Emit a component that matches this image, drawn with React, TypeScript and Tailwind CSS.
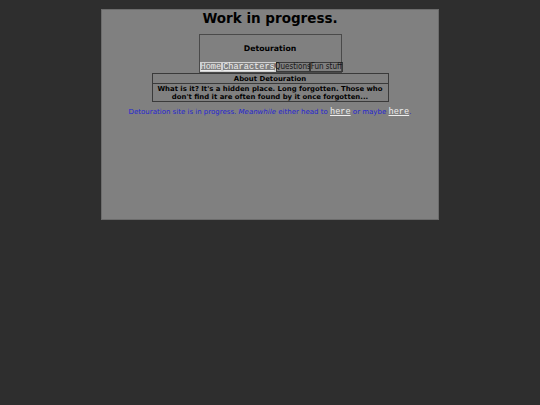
import React from 'react';

const sans = { fontFamily: '"DejaVu Sans", Verdana, sans-serif' };

export default function App() {
  return (
    <div className="min-h-[405px] w-full bg-[#2e2e2e] pt-[9px]" style={sans}>
      <div className="mx-auto flex h-[211px] w-[338px] flex-col items-center border border-[#6c6c6c] bg-[#808080] text-black">
        <h1 className="text-[13.5px] font-bold leading-[16px]">Work in progress.</h1>

        <div className="mt-[8px] flex w-[143px] flex-col border border-[#4a4a4a]">
          <div className="flex h-[27px] items-center justify-center text-[7.75px] font-bold">Detouration</div>
          <div className="flex h-[10px] whitespace-nowrap leading-[8px]">
            <a className="flex w-[23px] items-center justify-center border border-[#d0d0d0] font-['Liberation_Mono',monospace] text-[8.6px] text-[#eeeeee] underline">Home</a>
            <a className="flex w-[54px] items-center justify-center border border-[#d0d0d0] font-['Liberation_Mono',monospace] text-[8.6px] text-[#eeeeee] underline">Characters</a>
            <span className="flex w-[34px] items-center justify-center border border-[#3a3a3a] font-['Liberation_Sans_Narrow','DejaVu_Sans_Condensed',sans-serif] text-[8px] text-[#151515]">Questions</span>
            <span className="flex flex-1 items-center justify-center border border-[#3a3a3a] font-['Liberation_Sans_Narrow','DejaVu_Sans_Condensed',sans-serif] text-[8px] text-[#151515]">Fun stuff</span>
          </div>
        </div>

        <div className="flex w-[237px] flex-col border border-[#3a3a3a] text-[6.9px] font-bold leading-[8px]">
          <div className="flex h-[10px] items-center justify-center border-b border-[#3a3a3a]">About Detouration</div>
          <div className="flex h-[17px] items-center justify-center text-center">
            What is it? It's a hidden place. Long forgotten. Those who don't find it are often found by it once forgotten...
          </div>
        </div>

        <p className="mt-[5px] text-[7px] leading-[10px] text-[#2525d2]">
          Detouration site is in progress. <i>Meanwhile</i> either head to{' '}
          <a className="font-['Liberation_Mono',monospace] text-[8.6px] text-[#eeeeee] underline">here</a> or maybe{' '}
          <a className="font-['Liberation_Mono',monospace] text-[8.6px] text-[#eeeeee] underline">here</a>.
        </p>
      </div>
    </div>
  );
}
